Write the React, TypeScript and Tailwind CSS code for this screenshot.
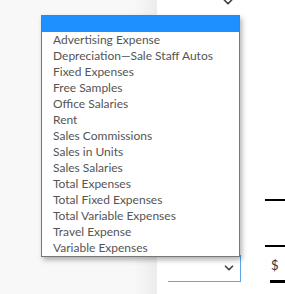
import { ChevronDown } from "lucide-react";

const options = [
  "Advertising Expense",
  "Depreciation\u2014Sale Staff Autos",
  "Fixed Expenses",
  "Free Samples",
  "Office Salaries",
  "Rent",
  "Sales Commissions",
  "Sales in Units",
  "Sales Salaries",
  "Total Expenses",
  "Total Fixed Expenses",
  "Total Variable Expenses",
  "Travel Expense",
  "Variable Expenses",
];

const Chevron = () => (
  <ChevronDown size={14} strokeWidth={3} className="text-[#444]" />
);

export default function App() {
  return (
    <div
      className="relative w-[285px] h-[294px] overflow-hidden bg-white"
      style={{ fontFamily: "Lato, 'Open Sans', sans-serif" }}
    >
      <div className="flex h-full">
        {/* sidebar */}
        <div className="w-[157px] h-full bg-[#f8f8f8] bg-gradient-to-r from-[#f8f8f8] from-85% to-[#ececec]" />

        {/* select column */}
        <div className="flex flex-col w-[84px] h-full">
          <div className="relative h-[14px] pl-[11px]">
            <div className="absolute right-[6px] -top-[5px]">
              <Chevron />
            </div>
          </div>
          <div className="flex-1" />
          <div className="ml-[11px] h-[27px] mb-[12px] border-b border-r border-[#5aa7ee] flex items-center justify-end pr-[4px]">
            <Chevron />
          </div>
        </div>

        {/* right column */}
        <div className="flex-1 flex flex-col pl-[24px] pt-[199px]">
          <div className="h-[2px] bg-black" />
          <div className="h-[44px]" />
          <div className="h-[2px] bg-black" />
          <div className="text-[13px] leading-none text-[#333] pl-[6px] mt-[12px]">$</div>
          <div className="h-[3px] bg-black ml-[5px] mt-[8px]" />
        </div>
      </div>

      {/* open dropdown list */}
      <div className="absolute left-[41px] top-[15px] w-[199px] bg-white border border-[#777] shadow-[2px_3px_5px_rgba(0,0,0,0.3)]">
        <div className="h-[16px] bg-[#1e90ff]" />
        <ul>
          {options.map((o) => (
            <li
              key={o}
              className="h-[16px] pl-[11px] text-[12px] leading-[16px] text-[#555] whitespace-nowrap"
            >
              {o}
            </li>
          ))}
        </ul>
      </div>
    </div>
  );
}
